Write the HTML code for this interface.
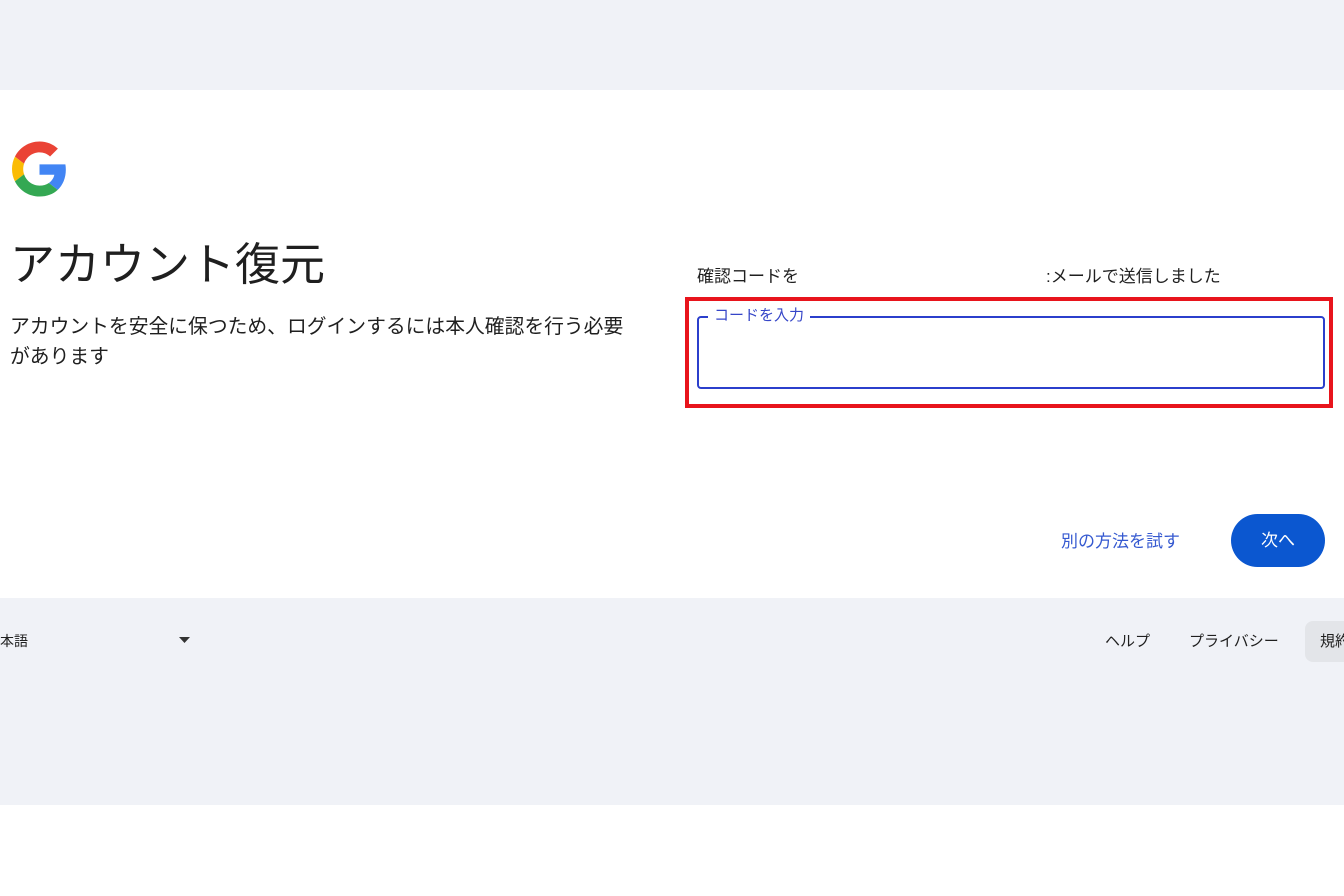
<!DOCTYPE html>
<html><head><meta charset="utf-8"><style>
*{margin:0;padding:0;box-sizing:border-box}
body{width:1344px;height:896px;position:relative;background:#fff;font-family:"Liberation Sans","Noto Sans CJK JP",sans-serif;color:#1f1f1f;overflow:hidden}
.a{position:absolute;white-space:nowrap}
</style></head><body>
<div class="a" style="left:0;top:0;width:1344px;height:90px;background:#f0f2f7"></div>
<div class="a" style="left:0;top:598px;width:1344px;height:207px;background:#f0f2f7"></div>
<svg class="a" style="left:12px;top:140px" width="55" height="58" viewBox="0 0 48 48">
<path fill="#EA4335" d="M24 9.5c3.54 0 6.710 1.22 9.21 3.6l6.85-6.85C35.9 2.38 30.47 0 24 0 14.62 0 6.51 5.38 2.56 13.22l7.98 6.19C12.43 13.72 17.74 9.5 24 9.5z"/>
<path fill="#4285F4" d="M46.98 24.55c0-1.57-.15-3.09-.38-4.55H24v9.02h12.94c-.58 2.96-2.26 5.48-4.78 7.18l7.73 6c4.51-4.18 7.09-10.36 7.09-17.650z"/>
<path fill="#FBBC05" d="M10.53 28.59c-.48-1.45-.76-2.99-.76-4.59s.27-3.14.76-4.59l-7.98-6.19C.92 16.46 0 20.12 0 24c0 3.88.92 7.54 2.56 10.78l7.97-6.19z"/>
<path fill="#34A853" d="M24 48c6.48 0 11.93-2.13 15.89-5.81l-7.73-6c-2.15 1.45-4.92 2.3-8.16 2.3-6.26 0-11.57-4.22-13.47-9.91l-7.98 6.19C6.51 42.62 14.62 48 24 48z"/>
</svg>
<div class="a" style="left:10px;top:228px;font-size:45px;color:#1f1f1f">アカウント復元</div>
<div class="a" style="left:10px;top:312px;font-size:19.8px;line-height:30px;color:#1f1f1f">アカウントを安全に保つため、ログインするには本人確認を行う必要<br>があります</div>
<div class="a" style="left:697px;top:262px;font-size:17px">確認コードを</div>
<div class="a" style="left:1046px;top:262px;font-size:17px">:メールで送信しました</div>
<div class="a" style="left:685px;top:297px;width:648px;height:111px;border:4px solid #e8141c"></div>
<div class="a" style="left:697px;top:316px;width:628px;height:73px;border:2px solid #2b3fcc;border-radius:4px"></div>
<div class="a" style="left:708px;top:304px;background:#fff;padding:0 6px;font-size:15px;color:#3545c8">コードを入力</div>
<div class="a" style="left:1061px;top:527px;font-size:17px;color:#3559d0">別の方法を試す</div>
<div class="a" style="left:1231px;top:514px;width:94px;height:53px;border-radius:27px;background:#0b57d0;color:#fff;font-size:17px;text-align:center;line-height:53px">次へ</div>
<div class="a" style="left:0;top:631px;font-size:14px">本語</div>
<svg class="a" style="left:179px;top:637px" width="12" height="7"><path d="M0 0h11L5.5 6z" fill="#333"/></svg>
<div class="a" style="left:1105px;top:630px;font-size:15px">ヘルプ</div>
<div class="a" style="left:1189px;top:630px;font-size:15px">プライバシー</div>
<div class="a" style="left:1305px;top:621px;width:60px;height:41px;border-radius:8px;background:#e3e5e9"></div>
<div class="a" style="left:1320px;top:630px;font-size:15px">規約</div>
</body></html>
